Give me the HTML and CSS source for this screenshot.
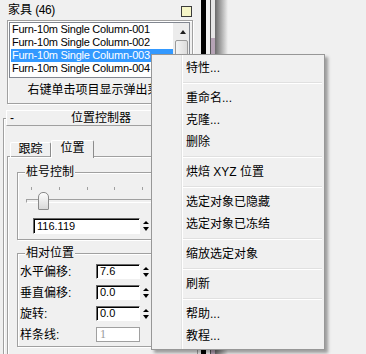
FILE: index.html
```html
<!DOCTYPE html>
<html lang="zh-CN">
<head>
  <meta charset="UTF-8" />
  <meta name="viewport" content="width=device-width, initial-scale=1.0"/>
  <title>家具 - 位置控制器</title>
  <link rel="stylesheet" href="styles.css">
</head>
<body>
  <div class="screen">
    <div class="panel">
      <div class="title-row">
        <span class="title">家具 <span class="count">(46)</span></span>
        <span class="swatch"></span>
      </div>

      <!-- object list -->
      <div class="frame list-frame">
        <div class="listbox">
          <ul class="items">
            <li>Furn-10m Single Column-001</li>
            <li>Furn-10m Single Column-002</li>
            <li class="selected">Furn-10m Single Column-003</li>
            <li>Furn-10m Single Column-004</li>
          </ul>
          <div class="vscroll">
            <span class="scroll-up"></span>
            <span class="scroll-thumb"></span>
          </div>
        </div>
        <div class="hint">右键单击项目显示弹出菜单</div>
      </div>

      <!-- position controller rollout -->
      <div class="rollout">
        <div class="rollout-head">
          <span class="toggle">-</span>
          <span class="rollout-title">位置控制器</span>
          <span class="toggle"></span>
        </div>
        <div class="tabs">
          <span class="tab">跟踪</span>
          <span class="tab active">位置</span>
        </div>
        <div class="tab-body">
          <fieldset class="group">
            <legend>桩号控制</legend>
            <div class="slider">
              <div class="ticks"><i></i><i></i><i></i><i></i><i></i></div>
              <div class="track"></div>
              <span class="thumb"></span>
            </div>
            <div class="field station">
              <span class="edit">116.119</span>
              <span class="spin"><i class="up"></i><i class="down"></i></span>
            </div>
          </fieldset>

          <fieldset class="group">
            <legend>相对位置</legend>
            <div class="field">
              <label>水平偏移:</label>
              <span class="edit">7.6</span>
              <span class="spin"><i class="up"></i><i class="down"></i></span>
            </div>
            <div class="field">
              <label>垂直偏移:</label>
              <span class="edit">0.0</span>
              <span class="spin"><i class="up"></i><i class="down"></i></span>
            </div>
            <div class="field">
              <label>旋转:</label>
              <span class="edit">0.0</span>
              <span class="spin"><i class="up"></i><i class="down"></i></span>
            </div>
            <div class="field">
              <label>样条线:</label>
              <span class="edit disabled">1</span>
            </div>
          </fieldset>
        </div>
      </div>
    </div>

    <div class="splitter"></div>
    <div class="viewport"></div>

    <!-- right-click menu -->
    <ul class="context-menu">
      <li>特性...</li>
      <li class="sep"></li>
      <li>重命名...</li>
      <li>克隆...</li>
      <li>删除</li>
      <li class="sep"></li>
      <li>烘焙 XYZ 位置</li>
      <li class="sep"></li>
      <li>选定对象已隐藏</li>
      <li>选定对象已冻结</li>
      <li class="sep"></li>
      <li>缩放选定对象</li>
      <li class="sep"></li>
      <li>刷新</li>
      <li class="sep"></li>
      <li>帮助...</li>
      <li>教程...</li>
    </ul>
  </div>
</body>
</html>
```

FILE: styles.css
```css
* {
  box-sizing: border-box;
}

body {
  margin: 0;
  background: #f0f0f0;
  color: #000;
  font-family: "Liberation Sans", "Noto Sans CJK SC", sans-serif;
  font-size: 12px;
  line-height: 14px;
}

.screen {
  position: relative;
  display: flex;
  width: 366px;
  height: 354px;
  overflow: hidden;
}

.panel {
  flex: none;
  width: 201px;
}

/* title */
.title-row {
  display: flex;
  height: 20px;
  padding: 3px 9px 0 8px;
}

.count {
  letter-spacing: -0.5px;
}

.swatch {
  margin: 3px 0 0 auto;
  width: 11px;
  height: 11px;
  border: 1px solid #3c3c3c;
  background: #f6f6c8;
}

/* etched frame */
.frame {
  border: 1px solid #a0a0a0;
  box-shadow: inset 1px 1px 0 #fff, 1px 1px 0 #fff;
}

.list-frame {
  margin-left: 7px;
  width: 186px;
  padding: 1px 2px 0 1px;
}

.listbox {
  display: flex;
  height: 56px;
  border: 1px solid #828790;
  background: #fff;
}

.items {
  flex: 1;
  min-width: 0;
  margin: 0;
  padding: 0 0 0 1px;
  list-style: none;
  font-size: 11px;
  letter-spacing: -0.25px;
}

.items li {
  height: 13px;
  line-height: 13px;
  padding-left: 1px;
  white-space: nowrap;
  overflow: hidden;
}

.items .selected {
  background: #3399ff;
  color: #fff;
}

.vscroll {
  flex: none;
  display: flex;
  flex-direction: column;
  width: 16px;
  background: #ececec;
}

.scroll-up {
  margin: 7px 0 0 7px;
  width: 0;
  border: 0 solid transparent;
  border-width: 0 3px 4px;
  border-bottom-color: #1e1e1e;
}

.scroll-thumb {
  margin: 6px 0 0 2px;
  width: 13px;
  height: 26px;
  border: 1px solid #9a9a9a;
  border-radius: 2px;
  background: linear-gradient(to right, #f4f4f4, #dcdcdc);
}

.hint {
  height: 25px;
  line-height: 25px;
  text-align: center;
  white-space: nowrap;
}

/* rollout */
.rollout {
  margin: 14px 0 0 3px;
  width: 195px;
  height: 260px;
  border: 1px solid #a0a0a0;
  border-bottom: 0;
  box-shadow: inset 1px 1px 0 #fff;
}

.rollout-head {
  display: flex;
  margin: -9px 0 0 2px;
  width: 190px;
  height: 16px;
  border: 1px solid;
  border-color: #fff #a0a0a0 #a0a0a0 #fff;
  background: #f0f0f0;
  line-height: 14px;
}

.toggle {
  flex: none;
  width: 20px;
  padding-left: 3px;
}

.rollout-title {
  flex: 1;
  text-align: center;
}

/* tabs */
.tabs {
  display: flex;
  align-items: flex-end;
  margin: 14px 0 0 6px;
  height: 17px;
}

.tab {
  height: 15px;
  width: 41px;
  border: 1px solid;
  border-bottom: 0;
  border-color: #fff #8c8c8c #fff #fff;
  border-radius: 2px 2px 0 0;
  text-align: center;
  line-height: 13px;
}

.tab.active {
  position: relative;
  z-index: 1;
  width: 43px;
  height: 18px;
  margin-bottom: -1px;
  background: #f0f0f0;
  line-height: 15px;
}

.tab-body {
  margin-left: 4px;
  width: 186px;
  height: 220px;
  border-top: 1px solid #fff;
  border-left: 1px solid #fff;
  box-shadow: -1px -1px 0 #a0a0a0;
}

/* group boxes */
.group {
  margin: 7px 0 0 8px;
  padding: 0 0 5px;
  width: 176px;
  min-width: 0;
  border: 1px solid #a0a0a0;
  box-shadow: inset 1px 1px 0 #fff, 1px 1px 0 #fff;
}

.group + .group {
  margin-top: 6px;
  padding-bottom: 4px;
}

.group legend {
  margin-left: 7px;
  padding: 0 1px;
  line-height: 14px;
  background: #f0f0f0;
}

/* slider */
.slider {
  position: relative;
  margin: 8px 0 0 8px;
  width: 160px;
}

.ticks {
  display: flex;
  justify-content: space-between;
  margin-left: 5px;
  width: 112px;
  height: 3px;
}

.ticks i {
  width: 1px;
  background: #a0a0a0;
}

.track {
  margin-top: 9px;
  height: 4px;
  border: 1px solid;
  border-color: #a0a0a0 #fff #fff #a0a0a0;
}

.thumb {
  position: absolute;
  left: 12px;
  top: 5px;
  width: 11px;
  height: 18px;
  border: 1px solid #8a8a8a;
  border-radius: 5px 5px 1px 1px;
  background: linear-gradient(#fdfdfd, #d8d8d8);
}

/* spinner fields */
.field {
  display: flex;
  align-items: center;
  height: 15px;
  margin-top: 6px;
  padding-left: 2px;
}

.field:first-of-type {
  margin-top: 4px;
}

.field label {
  flex: none;
  width: 76px;
  white-space: nowrap;
}

.field.station {
  height: 16px;
  margin: 15px 0 0 15px;
  padding: 0;
}

.edit {
  flex: none;
  width: 44px;
  height: 100%;
  padding-left: 3px;
  border: 1px solid;
  border-color: #696969 #fff #fff #696969;
  box-shadow: inset 1px 1px 0 #000;
  background: #fff;
  font-size: 11px;
  line-height: 13px;
}

.station .edit {
  width: 107px;
  line-height: 14px;
}

.edit.disabled {
  border-color: #a0a0a0;
  box-shadow: none;
  color: #9a9a9a;
  font-family: "Liberation Serif", serif;
  font-size: 12px;
}

.spin {
  display: flex;
  flex-direction: column;
  gap: 3px;
  margin-left: 3px;
}

.spin i {
  width: 0;
  border: 0 solid transparent;
}

.spin .up {
  border-width: 0 3px 3px;
  border-bottom-color: #000;
}

.spin .down {
  border-width: 4px 3px 0;
  border-top-color: #000;
}

/* divider between panel and viewport */
.splitter {
  flex: none;
  width: 27px;
  background:
    linear-gradient(#b5a3b5, #b5a3b5) 10px 38px / 4px 100% no-repeat,
    linear-gradient(to right, #000 0 5px, #f0f0f0 5px 9px, #555 9px 10px, #e6e6e6 10px 14px, #6a6a6a 14px, #f0f0f0 27px);
}

.viewport {
  flex: 1;
  background: #f0f0f0;
}

/* context menu */
.context-menu {
  position: absolute;
  left: 151px;
  top: 54px;
  width: 174px;
  margin: 0;
  padding: 2px;
  list-style: none;
  border: 1px solid #979797;
  background: #f0f0f0 linear-gradient(to right, transparent 29px, #e2e3e3 29px 30px, #fff 30px 31px, transparent 31px);
  box-shadow: 3px 3px 3px rgba(0, 0, 0, 0.35);
}

.context-menu li {
  height: 22px;
  padding-left: 32px;
  line-height: 22px;
  white-space: nowrap;
}

.context-menu .sep {
  height: 8px;
  margin-left: 29px;
  padding: 0;
  background: linear-gradient(transparent 3px, #e0e0e0 3px 4px, #fff 4px 5px, transparent 5px);
}
```
